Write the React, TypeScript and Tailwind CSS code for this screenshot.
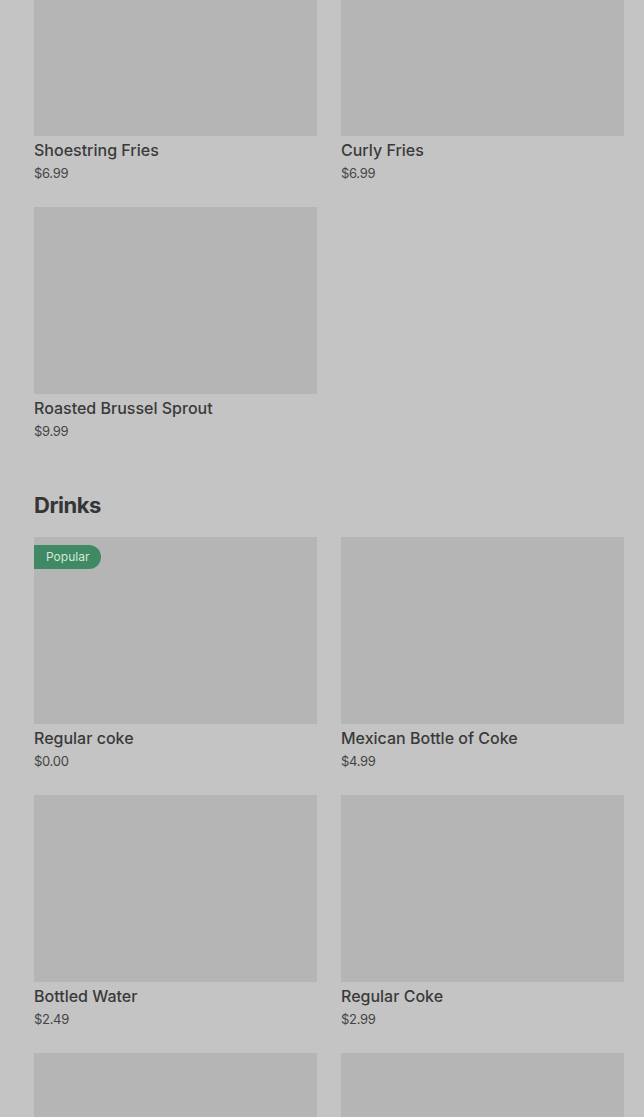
const sides = [
  { name: 'Shoestring Fries', price: '$6.99' },
  { name: 'Curly Fries', price: '$6.99' },
  { name: 'Roasted Brussel Sprout', price: '$9.99' },
];

const drinks = [
  { name: 'Regular coke', price: '$0.00', popular: true },
  { name: 'Mexican Bottle of Coke', price: '$4.99' },
  { name: 'Bottled Water', price: '$2.49' },
  { name: 'Regular Coke', price: '$2.99' },
  { name: '', price: '' },
  { name: '', price: '' },
];

type Item = { name: string; price: string; popular?: boolean };

const ItemCard = ({ item }: { item: Item }) => (
  <div className="flex flex-col">
    <div className="relative h-[187px] bg-[#b5b5b5]">
      {item.popular && (
        <span className="absolute left-0 top-2 flex h-6 items-center rounded-r-full bg-[#3f8a64] pl-3 pr-3 text-[12px] text-[#d6e6dc]">
          Popular
        </span>
      )}
    </div>
    {item.name && (
      <>
        <div className="mt-[2px] h-6 text-[16px] font-medium leading-6 text-[#3a3a3a]">{item.name}</div>
        <div className="mt-px h-5 text-[13px] leading-5 tracking-[-0.3px] text-[#444444]">{item.price}</div>
      </>
    )}
  </div>
);

const App = () => {
  return (
    <div className="h-[1117px] overflow-hidden bg-[#c4c4c4] font-['Inter',sans-serif]">
      <div className="mx-[34px] mt-[-51px] w-[590px]">
        <div className="grid grid-cols-2 gap-x-6 gap-y-[24px]">
          {sides.map((item) => (
            <ItemCard key={item.name} item={item} />
          ))}
        </div>
        <h2 className="mt-[48px] mb-[16px] text-[22px] font-bold leading-8 tracking-[-0.5px] text-[#353535]">Drinks</h2>
        <div className="grid grid-cols-2 gap-x-6 gap-y-[24px]">
          {drinks.map((item, i) => (
            <ItemCard key={i} item={item} />
          ))}
        </div>
      </div>
    </div>
  );
};

export default App;
